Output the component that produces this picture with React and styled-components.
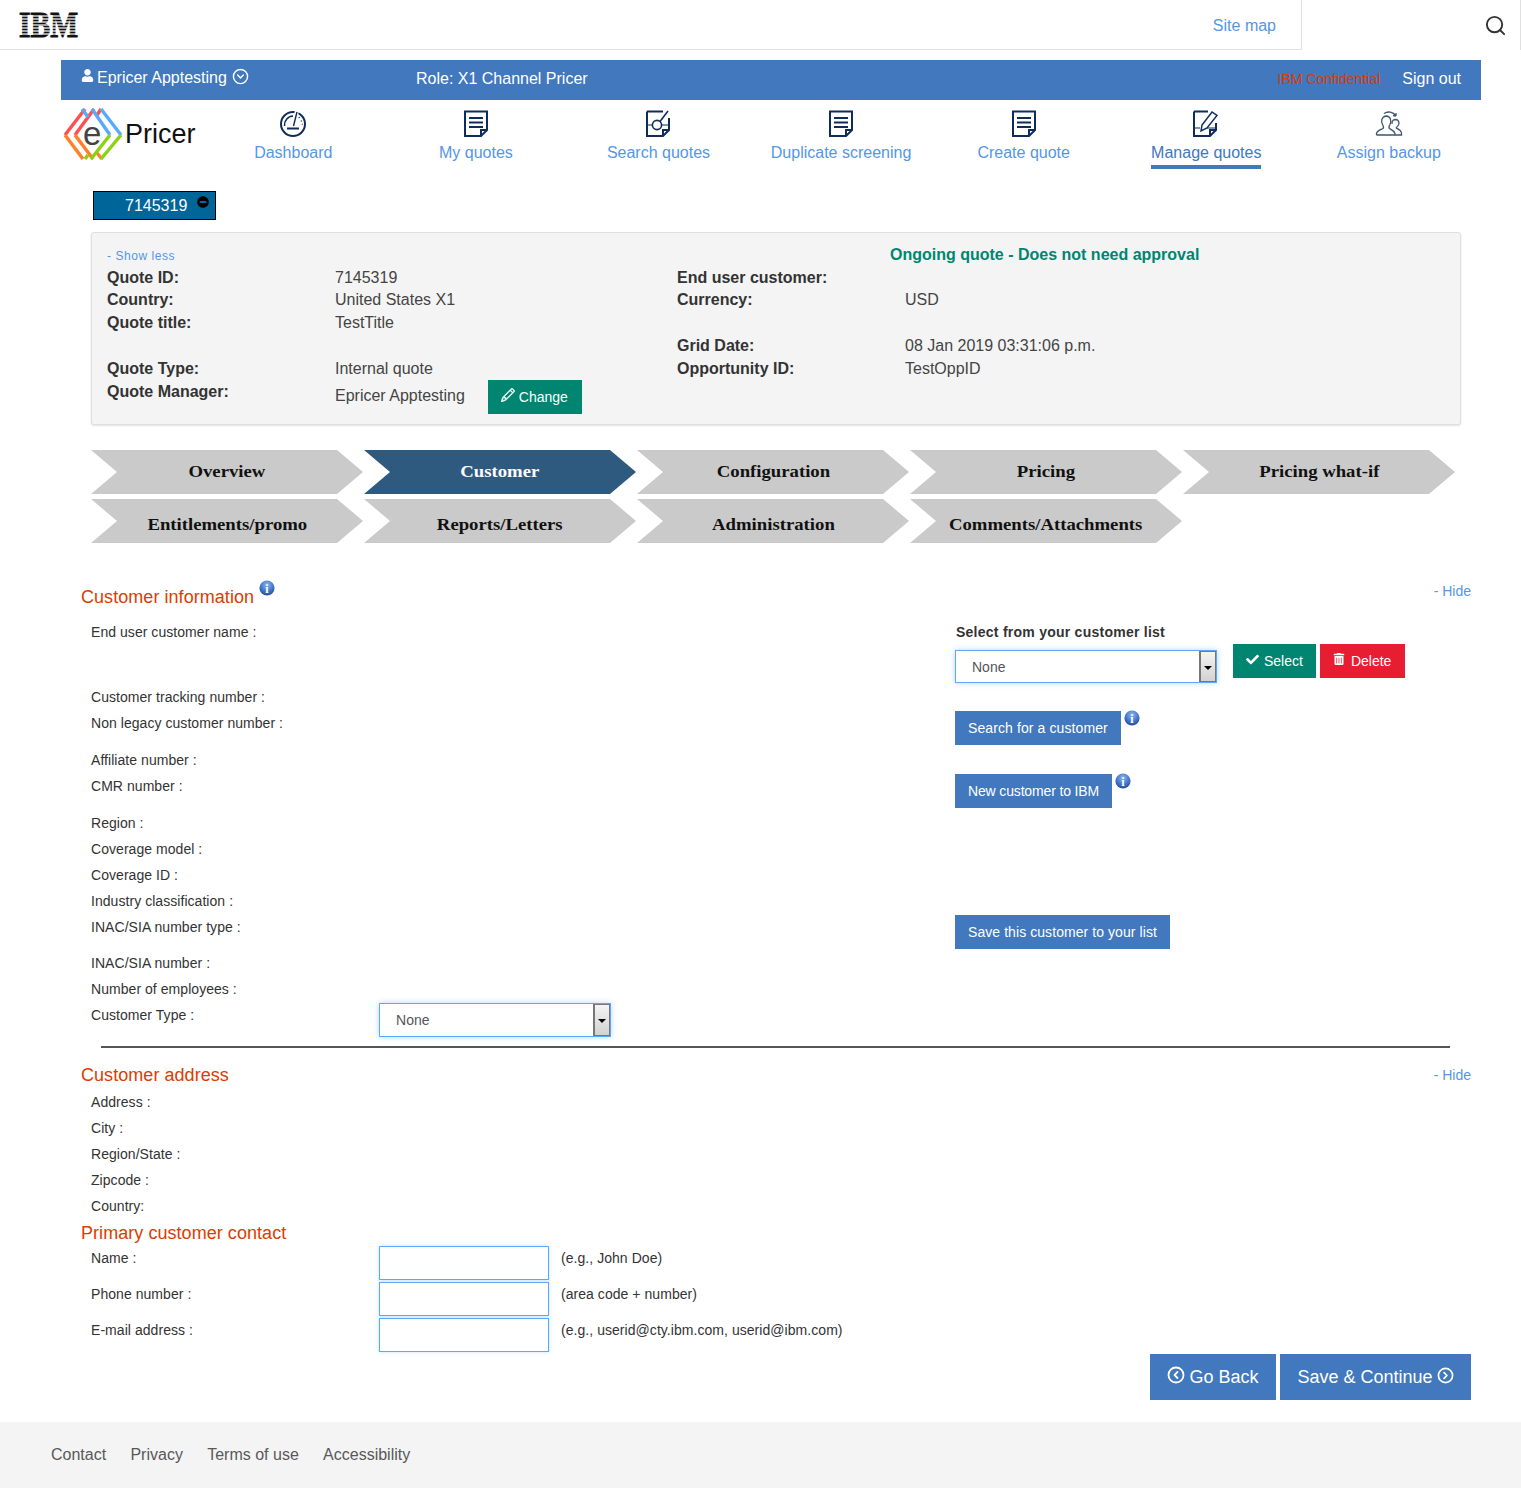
import React from "react";
import styled, { createGlobalStyle } from "styled-components";
import { CircleChevronDown, CircleChevronLeft, CircleChevronRight, Search } from "lucide-react";
import { FaUser, FaCheck, FaTrashAlt, FaMinusCircle } from "react-icons/fa";
import { BsPencil } from "react-icons/bs";

const GlobalStyle = createGlobalStyle`
  html, body {
    margin: 0;
    padding: 0;
    background: #fff;
    font-family: "Liberation Sans", Arial, sans-serif;
    color: #333;
  }
  * { box-sizing: border-box; }
`;

const Page = styled.div`
  width: 1521px;
  height: 1488px;
  overflow: hidden;
`;

const TopHeader = styled.header`
  display: flex;
  height: 50px;
`;

const TopLeft = styled.div`
  flex: 1;
  display: flex;
  align-items: center;
  justify-content: space-between;
  padding: 0 25px 0 19px;
  border-bottom: 1px solid #e0e0e0;
`;

const SiteMap = styled.a`
  margin-top: 2px;
  font-size: 16px;
  color: #5596e6;
`;

const SearchCell = styled.div`
  width: 220px;
  display: flex;
  align-items: center;
  justify-content: flex-end;
  padding: 0 13px 0 0;
  border-left: 1px solid #e0e0e0;
  border-right: 1px solid #e0e0e0;
  color: #333;
`;

const BlueBar = styled.div`
  display: flex;
  align-items: center;
  width: 1420px;
  height: 40px;
  margin: 10px 0 0 61px;
  padding: 0 20px 2px;
  background: #4178be;
  color: #fff;
  font-size: 16px;
`;

const UserBlock = styled.div`
  display: flex;
  align-items: center;
  width: 335px;
  gap: 4px;
  margin-top: -3px;
`;

const Confidential = styled.span`
  margin-left: auto;
  margin-right: 22px;
  font-size: 14px;
  color: #dc3c00;
`;

const NavRow = styled.nav`
  display: grid;
  grid-template-columns: 141px repeat(7, 182.6px);
  height: 70px;
  margin-left: 61px;
`;

const Logo = styled.div`
  display: flex;
  align-items: center;
  height: 68px;
  padding-left: 3px;
  font-size: 27px;
  line-height: 1;
  color: #111;
`;

const NavItem = styled.a`
  display: flex;
  flex-direction: column;
  align-items: center;
  padding-top: 10px;
  color: ${(p) => (p.$active ? "#4178be" : "#5596e6")};
  font-size: 16px;
`;

const NavLabel = styled.span`
  margin-top: 5px;
  padding-bottom: 2px;
  line-height: 20px;
  border-bottom: 4px solid ${(p) => (p.$active ? "#4178be" : "transparent")};
`;

const QuoteTab = styled.div`
  display: flex;
  align-items: center;
  width: 123px;
  height: 29px;
  margin: 21px 0 0 93px;
  padding-left: 31px;
  background: #006699;
  border: 1px solid #000;
  color: #fff;
  font-size: 16px;
  svg { margin: -7px 0 0 10px; color: #000; }
`;

const SummaryPanel = styled.section`
  width: 1370px;
  height: 193px;
  margin: 12px 0 0 91px;
  padding: 12px 15px 0;
  background: #f4f4f4;
  border: 1px solid #dfdfdf;
  border-radius: 3px;
  box-shadow: 0 1px 2px rgba(0, 0, 0, 0.12);
  font-size: 16px;
  line-height: 22.857px;
`;

const PanelTop = styled.div`
  display: grid;
  grid-template-columns: 783px 1fr;
  height: 21.6px;
  padding-top: 1px;
  line-height: 20px;
`;

const ShowLess = styled.a`
  font-size: 12px;
  letter-spacing: 0.55px;
  color: #5596e6;
`;

const Ongoing = styled.strong`
  margin-top: -1px;
  color: #008571;
  font-size: 16px;
`;

const SummaryColumns = styled.div`
  display: grid;
  grid-template-columns: 570px 570px;
`;

const SummaryRow = styled.div`
  display: grid;
  grid-template-columns: 228px 1fr;
  min-height: 22.857px;
`;

const SummaryLabel = styled.strong`
  color: #333;
`;

const SummaryValue = styled.span`
  color: #444;
`;

const ManagerValue = styled.span`
  display: flex;
  align-items: center;
  gap: 23px;
  margin-top: -1px;
  color: #444;
`;

const ActionButton = styled.button`
  display: inline-flex;
  align-items: center;
  gap: ${(p) => p.$gap || 4}px;
  width: ${(p) => (p.$w ? `${p.$w}px` : "auto")};
  height: 34px;
  padding: 0 13px;
  border: 0;
  border-radius: 0;
  background: ${(p) => p.$bg || "#4178be"};
  color: #fff;
  font-family: inherit;
  font-size: 14px;
  letter-spacing: ${(p) => p.$ls || 0}px;
  white-space: nowrap;
`;

const Chevrons = styled.div`
  display: grid;
  grid-template-columns: repeat(5, 272px);
  column-gap: 1px;
  row-gap: 5px;
  margin: 25px 0 0 91px;
`;

const Chevron = styled.div`
  display: flex;
  align-items: center;
  justify-content: center;
  height: 44px;
  padding-top: ${(p) => (p.$lower ? 8 : 0)}px;
  background: ${(p) => (p.$active ? "#2f5a80" : "#cacaca")};
  color: ${(p) => (p.$active ? "#fff" : "#111")};
  font-family: "Liberation Serif", "Times New Roman", serif;
  font-weight: 700;
  font-size: 16px;
  clip-path: polygon(0 0, 246px 0, 272px 50%, 246px 100%, 0 100%, 26px 50%);
`;

const StepLabel = styled.span`
  display: inline-block;
  transform: scaleX(1.17);
`;

const Content = styled.main`
  width: 1390px;
  margin: 41px 0 0 81px;
`;

const SectionHead = styled.div`
  display: flex;
  align-items: flex-start;
  justify-content: space-between;
  height: 26px;
`;

const SectionTitle = styled.h2`
  display: flex;
  margin: 0;
  color: #dc3c00;
  font-size: 18px;
  font-weight: 400;
  line-height: 26px;
  letter-spacing: 0.05px;
`;

const HideLink = styled.a`
  font-size: 14px;
  line-height: 14px;
  color: #5596e6;
  margin-top: ${(p) => p.$mt || 0}px;
`;

const InfoWrap = styled.span`
  display: inline-flex;
  margin: ${(p) => p.$m || "0"};
`;

const CustomerGrid = styled.div`
  display: grid;
  grid-template-columns: 874px 1fr;
  margin-top: 12px;
`;

const FieldList = styled.div`
  padding-left: 10px;
`;

const Field = styled.div`
  display: grid;
  grid-template-columns: 288px 1fr;
  margin-top: ${(p) => (p.$mt === undefined ? 6 : p.$mt)}px;
  font-size: 14px;
  line-height: 20px;
  min-height: 20px;
  color: #333;
  letter-spacing: 0.05px;
`;

const ControlField = styled(Field)`
  grid-template-columns: 288px auto 1fr;
`;

const ControlLabel = styled.span`
  padding-top: 2px;
`;

const RightColumn = styled.div`
  display: flex;
  flex-direction: column;
  align-items: flex-start;
`;

const ListTitle = styled.strong`
  margin-left: 1px;
  font-size: 14px;
  line-height: 20px;
  letter-spacing: 0.25px;
`;

const SelectRow = styled.div`
  display: flex;
  align-items: flex-start;
  margin-top: 2px;
`;

const SelectBox = styled.div`
  display: flex;
  align-items: center;
  justify-content: space-between;
  width: ${(p) => p.$w}px;
  height: ${(p) => p.$h || 34}px;
  margin-top: ${(p) => p.$mt || 0}px;
  border: 1px solid #5aaafa;
  box-shadow: 0 0 6px rgba(90, 170, 250, 0.45);
  background: #fff;
  color: #555;
  font-size: 14px;
  padding-left: 16px;
`;

const SelectArrow = styled.span`
  align-self: stretch;
  display: flex;
  align-items: center;
  justify-content: center;
  width: 17px;
  padding-top: 2px;
  background: linear-gradient(#f4f4f4, #d2d2d2);
  border: 1px solid #777;
  border-left-width: 2px;
  &::after {
    content: "";
    border-left: 4px solid transparent;
    border-right: 4px solid transparent;
    border-top: 4px solid #000;
  }
`;

const ButtonPair = styled.div`
  display: flex;
  gap: 4px;
  margin-left: 16px;
`;

const InfoButtonRow = styled.div`
  display: flex;
  align-items: flex-start;
  gap: 3px;
  margin-top: ${(p) => p.$mt}px;
`;

const Divider = styled.hr`
  width: 1349px;
  height: 2px;
  margin: 9px 0 0 20px;
  border: 0;
  background: #555;
`;

const AddressHead = styled(SectionHead)`
  margin-top: 14px;
`;

const ContactTitle = styled(SectionTitle)`
  margin-top: 4px;
`;

const TextBox = styled.div`
  width: 170px;
  height: 34px;
  border: 1px solid #5aaafa;
  box-shadow: 0 0 4px rgba(90, 170, 250, 0.35);
  background: #fff;
`;

const Hint = styled.span`
  padding: 2px 0 0 12px;
`;

const FormActions = styled.div`
  display: flex;
  justify-content: flex-end;
  gap: 4px;
  margin-top: 2px;
`;

const BigButton = styled.button`
  display: inline-flex;
  align-items: center;
  justify-content: center;
  gap: 4px;
  height: 46px;
  width: ${(p) => p.$w}px;
  border: 0;
  background: #4178be;
  color: #fff;
  font-family: inherit;
  font-size: 18px;
  svg { margin-top: -4px; }
`;

const Footer = styled.footer`
  display: flex;
  align-items: center;
  gap: 24.3px;
  height: 66px;
  margin-top: 22px;
  padding-left: 51px;
  background: #f4f4f4;
  color: #595859;
  font-size: 16px;
`;

const NAVY = "#0f2d5a";

const IbmLogo = () => (
  <svg width="62" height="47" viewBox="0 0 62 47" aria-label="IBM">
    <text
      transform="scale(1, 1.24)"
      x="0"
      y="29"
      fontFamily="Liberation Serif"
      fontWeight="700"
      fontSize="29.5"
      fill="#111"
      stroke="#111"
      strokeWidth="0.9"
    >
      IBM
    </text>
    {[14.4, 17.4, 20.4, 23.4, 26.4, 29.4, 32.4].map((y) => (
      <rect key={y} x="0" y={y} width="62" height="1.2" fill="#fff" />
    ))}
  </svg>
);

const PricerMark = () => (
  <svg width="60" height="52" viewBox="64 108 60 52" fill="none" strokeWidth="3.4" style={{ marginRight: 1 }}>
    <g stroke="#ff5050">
      <path d="M65 135 L85 109" />
      <path d="M75 135 L94 109" />
      <path d="M97 115 L101 109" />
    </g>
    <g stroke="#5aaafa">
      <path d="M82 109 L88 117" />
      <path d="M92 109 L110 135" />
      <path d="M101 109 L121 135" />
    </g>
    <g stroke="#ff7f2a">
      <path d="M65 135 L83 159" />
      <path d="M75 135 L93 159" />
      <path d="M97 153 L102 159" />
    </g>
    <g stroke="#8cd211">
      <path d="M121 135 L101 159" />
      <path d="M110 135 L91 159" />
      <path d="M88 155 L85 159" />
    </g>
    <text x="83" y="145" fontFamily="Liberation Sans" fontSize="33" fill="#444">
      e
    </text>
  </svg>
);

const DocShape = () => (
  <path d="M2 1.5 H24 V20 L18 26 H2 Z M24 20 H18 V26" stroke={NAVY} strokeWidth="2" fill="none" />
);

const IconFrame = ({ children, w = 26 }) => (
  <svg width={w} height="28" viewBox={`0 0 ${w} 28`} fill="none" stroke={NAVY} strokeWidth="2">
    {children}
  </svg>
);

const DashboardIcon = () => (
  <IconFrame w={28}>
    <circle cx="14" cy="14" r="12" />
    <path d="M5.5 16 A9 9 0 0 1 14 6" strokeWidth="1.5" />
    <path d="M14 16 L18 1" stroke="#fff" strokeWidth="4" />
    <path d="M14.5 16 L18 2" strokeWidth="1.4" />
    <path d="M8 18.5 H20" />
    <path d="M20 7 L20.5 8 M22 10.5 L22.6 11.5 M23 14 L23.6 14.5" strokeWidth="1.3" />
  </IconFrame>
);

const QuoteDocIcon = () => (
  <IconFrame>
    <DocShape />
    <path d="M6 8 H20 M6 12.5 H20 M6 17 H20" />
  </IconFrame>
);

const SearchDocIcon = () => (
  <IconFrame>
    <path d="M2 1.5 H18 M24 8 V20 L18 26 H2 V1.5 M24 20 H18 V26" />
    <circle cx="12" cy="15" r="4.6" strokeWidth="1.6" />
    <path d="M15 11.4 L23 1" strokeWidth="1.6" />
    <path d="M3 15 H7 M17 15 H23" strokeWidth="1.1" />
  </IconFrame>
);

const ManageDocIcon = () => (
  <IconFrame w={28}>
    <path d="M2 1.5 H16 M24 13 V20 L18 26 H2 V1.5 M24 20 H18 V26" />
    <path d="M3 18 H8 M15 18 H23" strokeWidth="1.2" />
    <path d="M9 21 L10 15 L20 2 L25 5.5 L15 18 Z" strokeWidth="1.5" />
  </IconFrame>
);

const AssignIcon = () => (
  <svg width="28" height="28" viewBox="0 0 28 28" fill="none" stroke="#3d5573" strokeWidth="1.3">
    <path d="M1.5 25 H26.5 V23 C26 20 23 19 21 18 M1.5 25 V23.5 C2 20.5 6 19.5 8 18.5 C9 17.5 8.5 16 7.5 14.5 C6 12 6 7 11 6 C16 6 16.5 12 15 14.5 C14 16 13.5 17.5 14.5 18.5 C16 19.5 19 20.5 20 23.5 V25" />
    <path d="M17 14 C16.5 10 19 9.5 21 9.5 C24 10 24.5 13 23.5 15 C22.5 16.5 21.5 17.5 21 18" />
    <path d="M9 3.5 C13 1 18 1.5 21 6 M21 6 L21 3 M21 6 L18 5.5" />
  </svg>
);

const InfoIcon = ({ id }) => (
  <svg width="16" height="16" viewBox="0 0 16 16">
    <defs>
      <radialGradient id={id} cx="50%" cy="30%" r="75%">
        <stop offset="0%" stopColor="#8db8f0" />
        <stop offset="60%" stopColor="#3f72c8" />
        <stop offset="100%" stopColor="#1d4590" />
      </radialGradient>
    </defs>
    <circle cx="8" cy="8" r="7.6" fill={`url(#${id})`} />
    <text x="8" y="12.5" textAnchor="middle" fontFamily="Liberation Serif" fontWeight="700" fontSize="12" fill="#fff">
      i
    </text>
  </svg>
);

const NAV_ITEMS = [
  { label: "Dashboard", icon: <DashboardIcon /> },
  { label: "My quotes", icon: <QuoteDocIcon /> },
  { label: "Search quotes", icon: <SearchDocIcon /> },
  { label: "Duplicate screening", icon: <QuoteDocIcon /> },
  { label: "Create quote", icon: <QuoteDocIcon /> },
  { label: "Manage quotes", icon: <ManageDocIcon />, active: true },
  { label: "Assign backup", icon: <AssignIcon /> },
];

const STEPS = [
  "Overview",
  "Customer",
  "Configuration",
  "Pricing",
  "Pricing what-if",
  "Entitlements/promo",
  "Reports/Letters",
  "Administration",
  "Comments/Attachments",
];

const CUSTOMER_FIELDS = [
  { label: "End user customer name :", mt: 0 },
  { label: "Customer tracking number :", mt: 45 },
  { label: "Non legacy customer number :" },
  { label: "Affiliate number :", mt: 17 },
  { label: "CMR number :" },
  { label: "Region :", mt: 17 },
  { label: "Coverage model :" },
  { label: "Coverage ID :" },
  { label: "Industry classification :" },
  { label: "INAC/SIA number type :" },
  { label: "INAC/SIA number :", mt: 16 },
  { label: "Number of employees :" },
];

const ADDRESS_FIELDS = ["Address :", "City :", "Region/State :", "Zipcode :", "Country:"];

const CONTACT_FIELDS = [
  { label: "Name :", hint: "(e.g., John Doe)" },
  { label: "Phone number :", hint: "(area code + number)" },
  { label: "E-mail address :", hint: "(e.g., userid@cty.ibm.com, userid@ibm.com)" },
];

const App = () => {
  return (
    <Page>
      <GlobalStyle />
      <TopHeader>
        <TopLeft>
          <IbmLogo />
          <SiteMap>Site map</SiteMap>
        </TopLeft>
        <SearchCell>
          <Search size={23} strokeWidth={2} />
        </SearchCell>
      </TopHeader>

      <BlueBar>
        <UserBlock>
          <FaUser size={13} style={{ marginTop: -5, marginRight: -1 }} />
          <span>Epricer Apptesting</span>
          <CircleChevronDown size={17} strokeWidth={2} style={{ marginTop: -3, marginLeft: 1 }} />
        </UserBlock>
        <span>Role: X1 Channel Pricer</span>
        <Confidential>IBM Confidential</Confidential>
        <span>Sign out</span>
      </BlueBar>

      <NavRow>
        <Logo>
          <PricerMark />
          Pricer
        </Logo>
        {NAV_ITEMS.map((item) => (
          <NavItem key={item.label} $active={item.active}>
            {item.icon}
            <NavLabel $active={item.active}>{item.label}</NavLabel>
          </NavItem>
        ))}
      </NavRow>

      <QuoteTab>
        7145319
        <FaMinusCircle size={12} />
      </QuoteTab>

      <SummaryPanel>
        <PanelTop>
          <ShowLess>- Show less</ShowLess>
          <Ongoing>Ongoing quote - Does not need approval</Ongoing>
        </PanelTop>
        <SummaryColumns>
          <div>
            <SummaryRow>
              <SummaryLabel>Quote ID:</SummaryLabel>
              <SummaryValue>7145319</SummaryValue>
            </SummaryRow>
            <SummaryRow>
              <SummaryLabel>Country:</SummaryLabel>
              <SummaryValue>United States X1</SummaryValue>
            </SummaryRow>
            <SummaryRow>
              <SummaryLabel>Quote title:</SummaryLabel>
              <SummaryValue>TestTitle</SummaryValue>
            </SummaryRow>
            <SummaryRow />
            <SummaryRow>
              <SummaryLabel>Quote Type:</SummaryLabel>
              <SummaryValue>Internal quote</SummaryValue>
            </SummaryRow>
            <SummaryRow>
              <SummaryLabel>Quote Manager:</SummaryLabel>
              <ManagerValue>
                Epricer Apptesting
                <ActionButton $bg="#008571" $w={94}>
                  <BsPencil size={14} strokeWidth={0.6} style={{ marginTop: -3 }} />
                  Change
                </ActionButton>
              </ManagerValue>
            </SummaryRow>
          </div>
          <div>
            <SummaryRow>
              <SummaryLabel>End user customer:</SummaryLabel>
              <SummaryValue />
            </SummaryRow>
            <SummaryRow>
              <SummaryLabel>Currency:</SummaryLabel>
              <SummaryValue>USD</SummaryValue>
            </SummaryRow>
            <SummaryRow />
            <SummaryRow>
              <SummaryLabel>Grid Date:</SummaryLabel>
              <SummaryValue>08 Jan 2019 03:31:06 p.m.</SummaryValue>
            </SummaryRow>
            <SummaryRow>
              <SummaryLabel>Opportunity ID:</SummaryLabel>
              <SummaryValue>TestOppID</SummaryValue>
            </SummaryRow>
          </div>
        </SummaryColumns>
      </SummaryPanel>

      <Chevrons>
        {STEPS.map((step, i) => (
          <Chevron key={step} $active={step === "Customer"} $lower={i >= 5}>
            <StepLabel>{step}</StepLabel>
          </Chevron>
        ))}
      </Chevrons>

      <Content>
        <SectionHead>
          <SectionTitle>
            Customer information
            <InfoWrap $m="-4px 0 0 5px">
              <InfoIcon id="info-a" />
            </InfoWrap>
          </SectionTitle>
          <HideLink>- Hide</HideLink>
        </SectionHead>

        <CustomerGrid>
          <FieldList>
            {CUSTOMER_FIELDS.map((f) => (
              <Field key={f.label} $mt={f.mt}>
                <span>{f.label}</span>
              </Field>
            ))}
            <ControlField $mt={4}>
              <ControlLabel>Customer Type :</ControlLabel>
              <SelectBox $w={232}>
                None
                <SelectArrow />
              </SelectBox>
            </ControlField>
          </FieldList>

          <RightColumn>
            <ListTitle>Select from your customer list</ListTitle>
            <SelectRow>
              <SelectBox $w={262} $h={33} $mt={6}>
                None
                <SelectArrow />
              </SelectBox>
              <ButtonPair>
                <ActionButton $bg="#008571" $gap={5}>
                  <FaCheck size={13} style={{ marginTop: -4 }} />
                  Select
                </ActionButton>
                <ActionButton $bg="#e71d32" $gap={6} $w={85}>
                  <FaTrashAlt size={12} style={{ marginTop: -4 }} />
                  Delete
                </ActionButton>
              </ButtonPair>
            </SelectRow>
            <InfoButtonRow $mt={28}>
              <ActionButton $w={166} $ls={0.1}>
                Search for a customer
              </ActionButton>
              <InfoWrap $m="-1px 0 0 0">
                <InfoIcon id="info-b" />
              </InfoWrap>
            </InfoButtonRow>
            <InfoButtonRow $mt={29}>
              <ActionButton $w={157} $ls={-0.15}>
                New customer to IBM
              </ActionButton>
              <InfoWrap $m="-1px 0 0 0">
                <InfoIcon id="info-c" />
              </InfoWrap>
            </InfoButtonRow>
            <InfoButtonRow $mt={107}>
              <ActionButton $w={215} $ls={0.07}>
                Save this customer to your list
              </ActionButton>
            </InfoButtonRow>
          </RightColumn>
        </CustomerGrid>

        <Divider />

        <AddressHead>
          <SectionTitle>Customer address</SectionTitle>
          <HideLink $mt={6}>- Hide</HideLink>
        </AddressHead>
        <FieldList>
          {ADDRESS_FIELDS.map((label, i) => (
            <Field key={label} $mt={i === 0 ? 4 : 6}>
              <span>{label}</span>
            </Field>
          ))}
        </FieldList>

        <ContactTitle>Primary customer contact</ContactTitle>
        <FieldList>
          {CONTACT_FIELDS.map((f, i) => (
            <ControlField key={f.label} $mt={i === 0 ? 0 : 2}>
              <ControlLabel>{f.label}</ControlLabel>
              <TextBox />
              <Hint>{f.hint}</Hint>
            </ControlField>
          ))}
        </FieldList>

        <FormActions>
          <BigButton $w={126}>
            <CircleChevronLeft size={18} strokeWidth={2.4} />
            Go Back
          </BigButton>
          <BigButton $w={191}>
            Save &amp; Continue
            <CircleChevronRight size={17} strokeWidth={2.4} />
          </BigButton>
        </FormActions>
      </Content>

      <Footer>
        <span>Contact</span>
        <span>Privacy</span>
        <span>Terms of use</span>
        <span>Accessibility</span>
      </Footer>
    </Page>
  );
};

export default App;
